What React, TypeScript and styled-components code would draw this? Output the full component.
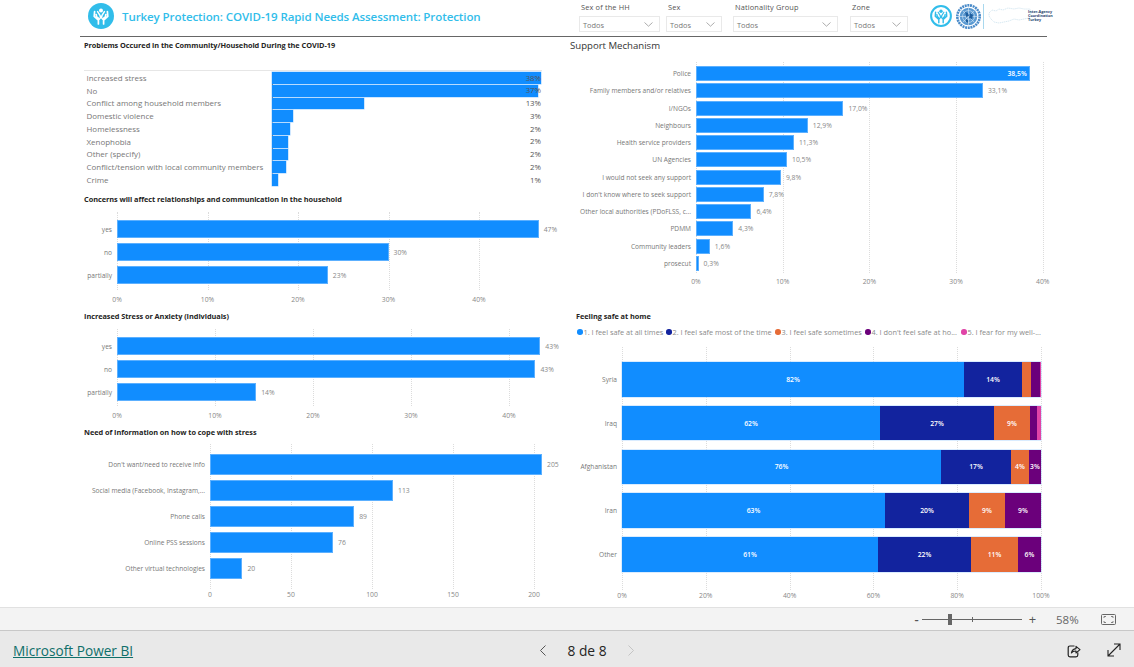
import React from "react";
import styled, { createGlobalStyle } from "styled-components";

const Global = createGlobalStyle`
  html, body { margin: 0; padding: 0; background: #fff; overflow: hidden; }
  * { box-sizing: border-box; }
  body { font-family: "Open Sans", "Noto Sans", sans-serif; }
`;

const Page = styled.div`
  width: 1134px; height: 667px; display: flex; flex-direction: column; overflow: hidden;
`;
const Report = styled.main`
  height: 607px; display: flex; flex-direction: column; background: #fff;
`;
const Header = styled.header`
  margin-left: 80px; width: 967px; height: 37px; display: flex; border-bottom: 1px solid #666;
`;
const Brand = styled.div`
  width: 499px; flex: none; height: 32px; display: flex; align-items: center; gap: 8px; padding-left: 8px;
`;
const ReportTitle = styled.h1`
  margin: 0; font-size: 11.55px; font-weight: 600; color: #31bdea; white-space: nowrap; letter-spacing: -0.1px;
`;
const Filters = styled.div`
  display: flex; flex: none;
`;
const Filter = styled.div<{ $w: number; $gap: number }>`
  width: ${(p) => p.$w}px; margin-right: ${(p) => p.$gap}px; display: flex; flex-direction: column;
`;
const FilterLabel = styled.label`
  height: 16px; padding: 2px 0 0 2px; font-size: 7.4px; line-height: 10px; color: #555; white-space: nowrap; letter-spacing: 0.15px;
`;
const Dropdown = styled.div`
  height: 16px; border: 1px solid #e9e9e9; display: flex; align-items: center; justify-content: space-between;
  padding: 1px 6px 0 3px; font-size: 7.4px; color: #777;
`;
const Logos = styled.div`
  display: flex; flex: none; align-items: center; height: 32px; gap: 4px;
`;
const LogoDivider = styled.span`
  width: 1px; height: 25px; background: #a9d8ee; margin-left: -2px;
`;
const LogoText = styled.span`
  width: 26px; margin-left: -8px; font-size: 3.8px; line-height: 4.2px; font-weight: 700; color: #1f3f6e;
`;
const Graphic = styled.svg`
  flex: none; display: block;
`;

const Columns = styled.div`
  flex: 1; display: grid; grid-template-columns: 486px 1fr; padding-left: 84px;
`;
const Column = styled.div`
  display: flex; flex-direction: column;
`;
const Visual = styled.section<{ $h: number }>`
  height: ${(p) => p.$h}px;
`;
const Title = styled.h2`
  margin: 0; height: 12px; font-size: 7.35px; line-height: 12px; font-weight: 700; color: #252423; white-space: nowrap; letter-spacing: -0.05px;
`;
const TopTitle = styled(Title)`
  margin-top: 2px;
`;
const IndentedTitle = styled(Title)`
  padding-left: 6px;
`;
const LargeTitle = styled.h2`
  margin: 0; height: 18px; font-size: 9.6px; line-height: 18px; font-weight: 400; color: #333; white-space: nowrap;
`;

const Table = styled.div`
  margin-top: 19px; width: 458px; border-top: 1px solid #e6e6e6; padding-top: 0.6px;
`;
const TableRow = styled.div`
  height: 12.75px; display: flex; align-items: center;
`;
const TableLabel = styled.span`
  width: 188px; padding-left: 2.5px; font-size: 7.95px; color: #777; white-space: nowrap; overflow: hidden;
`;
const TableCell = styled.div`
  position: relative; flex: 1; height: 100%; display: flex; align-items: center; border-left: 1px solid #333;
`;
const TableBar = styled.div`
  height: 11.6px; margin-left: -1px; background: #118dff; box-shadow: 0 0 0 0.5px #9fd0ff;
`;
const TableValue = styled.span`
  position: absolute; right: 1px; top: 0; font-size: 7.8px; line-height: 12.75px; color: #555;
`;

const Plot = styled.div<{ $mt: number; $pt: number; $pb: number }>`
  position: relative; margin-top: ${(p) => p.$mt}px; padding: ${(p) => p.$pt}px 0 ${(p) => p.$pb}px;
`;
const GridLine = styled.span`
  position: absolute; top: 0; bottom: 0; width: 0; border-left: 1px dotted #dcdcdc;
`;
const Row = styled.div<{ $h: number; $gap: number }>`
  position: relative; height: ${(p) => p.$h}px; margin-bottom: ${(p) => p.$gap}px; display: flex; align-items: center;
  &:last-child { margin-bottom: 0; }
`;
const RowLabel = styled.span<{ $w: number }>`
  width: ${(p) => p.$w}px; flex: none; padding-right: 5px; text-align: right; font-size: 6.6px; color: #777; white-space: nowrap; overflow: hidden;
`;
const Bar = styled.div`
  flex: none; height: 100%; display: flex; align-items: center; justify-content: flex-end; background: #118dff; box-shadow: inset 0 0 0 1px #5cb0ff;
`;
const InsideValue = styled.span`
  padding-right: 3px; font-size: 6.8px; font-weight: 600; color: #fff;
`;
const OutsideValue = styled.span`
  margin-left: 5px; font-size: 6.8px; color: #888; white-space: nowrap;
`;
const Axis = styled.div<{ $mt: number; $ml: number }>`
  margin-top: ${(p) => p.$mt}px; margin-left: ${(p) => p.$ml}px; display: flex; height: 10px;
`;
const Tick = styled.span<{ $w: number }>`
  width: ${(p) => p.$w}px; flex: none; text-align: center; font-size: 6.8px; line-height: 10px; color: #888;
`;

const Legend = styled.div`
  margin-top: 5px; height: 10px; display: flex; padding-left: 7px; font-size: 7.35px; line-height: 10px; color: #8a8a8a; white-space: nowrap;
`;
const LegendItem = styled.span<{ $w: number }>`
  width: ${(p) => p.$w}px; flex: none; display: flex; align-items: center; gap: 1px;
`;
const Dot = styled.i<{ $c: string }>`
  width: 5.5px; height: 5.5px; border-radius: 50%; background: ${(p) => p.$c}; flex: none;
`;
const Stack = styled.div`
  display: flex; height: 100%; box-shadow: 0 0 0 0.5px #b5d9ff;
`;
const Segment = styled.div<{ $c: string }>`
  height: 100%; flex: none; background: ${(p) => p.$c}; color: #fff; display: flex; align-items: center; justify-content: center;
  font-size: 6.8px; font-weight: 600; overflow: hidden;
`;

const ZoomBar = styled.div`
  height: 24px; border-top: 1px solid #e1e1e1; border-bottom: 1px solid #c8c8c8; background: #f3f3f3;
  display: flex; align-items: center; color: #666; padding-left: 911px;
`;
const ZoomSign = styled.span`
  width: 11px; font-size: 13px; font-weight: 600; line-height: 20px; text-align: center; color: #555;
`;
const ZoomPlus = styled(ZoomSign)`
  width: 9px; font-weight: 400;
`;
const Slider = styled.div`
  position: relative; width: 100px; height: 1px; margin: 0 6px 0 0; background: #666;
`;
const SliderThumb = styled.span`
  position: absolute; left: 26px; top: -5px; width: 4px; height: 11px; background: #666;
`;
const SliderNotch = styled.span`
  position: absolute; left: 50px; top: -2px; width: 1px; height: 5px; background: #666;
`;
const ZoomValue = styled.span`
  margin-left: 19px; width: 45px; font-size: 11.5px; color: #666;
`;
const Footer = styled.footer`
  flex: 1; background: #e9e9e9; display: grid; grid-template-columns: 539px auto 1fr; align-items: center; padding-top: 2px;
`;
const PowerLink = styled.a`
  margin-left: 13px; font-size: 13.65px; color: #0f6f6a; text-decoration: underline; white-space: nowrap;
`;
const Pager = styled.div`
  display: flex; align-items: center; color: #252423;
`;
const PageText = styled.span`
  width: 60px; margin: 0 10px; text-align: center; font-size: 13.8px; font-weight: 500; color: #252423;
`;
const FooterActions = styled.div`
  display: flex; justify-content: flex-end; align-items: center; gap: 26px; padding-right: 13px;
`;

type Item = { label: string; value: number; text: string };

const HChart = ({ items, labelW, scale, ticks, step, rowH, gap, mt, pt, pb, axisMt, insideFirst, percent }: {
  items: Item[]; labelW: number; scale: number; ticks: number[]; step: number; rowH: number; gap: number;
  mt: number; pt: number; pb: number; axisMt: number; insideFirst?: boolean; percent?: boolean;
}) => (
  <>
    <Plot $mt={mt} $pt={pt} $pb={pb}>
      {ticks.map((t) => (
        <GridLine key={t} style={{ left: labelW + t * scale }} />
      ))}
      {items.map((it, i) => (
        <Row key={it.label} $h={rowH} $gap={gap}>
          <RowLabel $w={labelW}>{it.label}</RowLabel>
          <Bar style={{ width: it.value * scale }}>
            {insideFirst && i === 0 && <InsideValue>{it.text}</InsideValue>}
          </Bar>
          {!(insideFirst && i === 0) && <OutsideValue>{it.text}</OutsideValue>}
        </Row>
      ))}
    </Plot>
    <Axis $mt={axisMt} $ml={labelW - (step * scale) / 2}>
      {ticks.map((t) => (
        <Tick key={t} $w={step * scale}>{t}{percent ? "%" : ""}</Tick>
      ))}
    </Axis>
  </>
);

const HandsLogo = ({ size, ring }: { size: number; ring?: boolean }) => (
  <Graphic width={size} height={size} viewBox="0 0 26 26">
    {ring ? (
      <circle cx="13" cy="13" r="11.7" fill="#fff" stroke="#31bdea" strokeWidth="2.4" />
    ) : (
      <circle cx="13" cy="13" r="13" fill="#31bdea" />
    )}
    <g fill="none" stroke={ring ? "#31bdea" : "#fff"} strokeLinecap="round" strokeLinejoin="round">
      <circle cx="13" cy="7.4" r="2" fill={ring ? "#31bdea" : "#fff"} stroke="none" />
      <path d="M9.6 8.6 L12 12.4 L12.6 15 M16.4 8.6 L14 12.4 L13.4 15" strokeWidth="1.5" />
      <path d="M6.6 8.5 L6.2 13.4 L10.4 17.2 L10.4 21 M8.2 11.6 L8.6 13.8 L11.4 16" strokeWidth="1.7" />
      <path d="M19.4 8.5 L19.8 13.4 L15.6 17.2 L15.6 21 M17.8 11.6 L17.4 13.8 L14.6 16" strokeWidth="1.7" />
    </g>
  </Graphic>
);

const UnLogo = () => (
  <Graphic width="25" height="25" viewBox="0 0 25 25">
    <circle cx="12.5" cy="12.5" r="11.2" fill="none" stroke="#4a8bc9" strokeWidth="2.6" strokeDasharray="2 0.7" />
    <circle cx="12.5" cy="12.5" r="8.8" fill="#5a9ad2" />
    <g fill="none" stroke="#d8e8f5" strokeWidth="0.6">
      <circle cx="12.5" cy="12.5" r="6" />
      <circle cx="12.5" cy="12.5" r="3" />
      <path d="M12.5 4v17M4 12.5h17M6.5 6.5l12 12M18.5 6.5l-12 12" />
    </g>
    <path d="M9 8l3 1 1 3-3 1zM14 9l3 2-1 4-3-1zM10 15l2 1 0 3-2-1z" fill="#1f5f9f" />
  </Graphic>
);

const TurkeyMap = () => (
  <Graphic width="44" height="22" viewBox="0 0 44 22">
    <path
      d="M1 8 L4 5 L8 6 L11 4 L15 5 L20 3 L26 4 L31 3 L36 4 L42 4 L43 9 L41 13 L36 14 L31 15 L26 14 L21 16 L16 17 L11 18 L6 17 L3 14 L1 11 Z"
      fill="none" stroke="#cfe3ef" strokeWidth="0.8" strokeDasharray="1.4 0.6"
    />
  </Graphic>
);

const Chevron = ({ dir = "down", color = "#888", size = 8 }: { dir?: "down" | "left" | "right"; color?: string; size?: number }) => {
  if (dir === "down") {
    return (
      <Graphic width="9" height="5" viewBox="0 0 9 5"><path d="M0.5 0.5 L4.5 4.2 L8.5 0.5" fill="none" stroke={color} strokeWidth="0.7" /></Graphic>
    );
  }
  return (
    <Graphic width={size} height="11" viewBox="0 0 8 11">
      <path d={dir === "left" ? "M6.5 0.5 L1.5 5.5 L6.5 10.5" : "M1.5 0.5 L6.5 5.5 L1.5 10.5"} fill="none" stroke={color} strokeWidth="1" />
    </Graphic>
  );
};

const FitIcon = () => (
  <Graphic width="15" height="11" viewBox="0 0 15 11">
    <rect x="0.5" y="0.5" width="14" height="10" rx="1" fill="none" stroke="#666" />
    <path d="M3 4V2.5H5M10 2.5H12V4M12 7V8.5H10M5 8.5H3V7" fill="none" stroke="#666" strokeWidth="0.8" />
  </Graphic>
);
const ShareIcon = () => (
  <Graphic width="14" height="15" viewBox="0 0 14 15">
    <path d="M7.5 3 H3 Q1.2 3 1.2 4.8 V12 Q1.2 13.8 3 13.8 H9 Q10.8 13.8 10.8 12 V9.5" fill="none" stroke="#222" strokeWidth="1.2" />
    <path d="M4.4 10 Q5 6 9 5.6 V3.4 L13 6.7 L9 10 V8 Q6 7.8 4.4 10 Z" fill="#e9e9e9" stroke="#222" strokeWidth="1.1" strokeLinejoin="round" />
  </Graphic>
);
const ExpandIcon = () => (
  <Graphic width="14" height="14" viewBox="0 0 14 14">
    <path d="M1.5 12.5 L12.5 1.5 M7 1 H13 V7 M1 7 V13 H7" fill="none" stroke="#222" strokeWidth="1.1" />
  </Graphic>
);

const problems = [
  ["Increased stress", 269, "38%"], ["No", 266, "37%"], ["Conflict among household members", 92, "13%"],
  ["Domestic violence", 21, "3%"], ["Homelessness", 18, "2%"], ["Xenophobia", 16, "2%"], ["Other (specify)", 15.5, "2%"],
  ["Conflict/tension with local community members", 14, "2%"], ["Crime", 6, "1%"],
] as const;

const concerns: Item[] = [
  { label: "yes", value: 46.6, text: "47%" }, { label: "no", value: 30, text: "30%" }, { label: "partially", value: 23.3, text: "23%" },
];
const stressItems: Item[] = [
  { label: "yes", value: 43.2, text: "43%" }, { label: "no", value: 42.7, text: "43%" }, { label: "partially", value: 14.2, text: "14%" },
];
const info: Item[] = [
  { label: "Don't want/need to receive info", value: 205, text: "205" },
  { label: "Social media (Facebook, Instagram,...", value: 113, text: "113" },
  { label: "Phone calls", value: 89, text: "89" },
  { label: "Online PSS sessions", value: 76, text: "76" },
  { label: "Other virtual technologies", value: 20, text: "20" },
];
const support: Item[] = [
  ["Police", 38.5], ["Family members and/or relatives", 33.1], ["I/NGOs", 17.0], ["Neighbours", 12.9],
  ["Health service providers", 11.3], ["UN Agencies", 10.5], ["I would not seek any support", 9.8],
  ["I don't know where to seek support", 7.8], ["Other local authorities (PDoFLSS, c...", 6.4], ["PDMM", 4.3],
  ["Community leaders", 1.6], ["prosecut", 0.3],
].map(([label, v]) => ({ label: label as string, value: v as number, text: `${(v as number).toFixed(1).replace(".", ",")}%` }));

const colors = ["#118dff", "#12239e", "#e66c37", "#6b007b", "#e044a7"];
const legend = [
  { t: "1. I feel safe at all times", w: 89 }, { t: "2. I feel safe most of the time", w: 109 },
  { t: "3. I feel safe sometimes", w: 90 }, { t: "4. I don't feel safe at ho...", w: 96 }, { t: "5. I fear for my well-...", w: 85 },
];
const safety: { label: string; parts: [number, string][] }[] = [
  { label: "Syria", parts: [[342, "82%"], [58, "14%"], [9, ""], [9, ""], [1, ""]] },
  { label: "Iraq", parts: [[258, "62%"], [114, "27%"], [36, "9%"], [7, ""], [4, ""]] },
  { label: "Afghanistan", parts: [[319, "76%"], [70, "17%"], [18, "4%"], [12, "3%"]] },
  { label: "Iran", parts: [[263, "63%"], [84, "20%"], [36, "9%"], [36, "9%"]] },
  { label: "Other", parts: [[256, "61%"], [93, "22%"], [47, "11%"], [23, "6%"]] },
];
const filters = [
  { label: "Sex of the HH", w: 81, gap: 6 }, { label: "Sex", w: 56, gap: 11 },
  { label: "Nationality Group", w: 105, gap: 12 }, { label: "Zone", w: 58, gap: 22 },
];

export default function App() {
  return (
    <Page>
      <Global />
      <Report>
        <Header>
          <Brand>
            <HandsLogo size={26} />
            <ReportTitle>Turkey Protection: COVID-19 Rapid Needs Assessment: Protection</ReportTitle>
          </Brand>
          <Filters>
            {filters.map((f) => (
              <Filter key={f.label} $w={f.w} $gap={f.gap}>
                <FilterLabel>{f.label}</FilterLabel>
                <Dropdown>Todos<Chevron /></Dropdown>
              </Filter>
            ))}
          </Filters>
          <Logos>
            <HandsLogo size={22} ring />
            <UnLogo />
            <LogoDivider />
            <TurkeyMap />
            <LogoText>Inter-Agency Coordination Turkey</LogoText>
          </Logos>
        </Header>
        <Columns>
          <Column>
            <Visual $h={156}>
              <TopTitle>Problems Occured in the Community/Household During the COVID-19</TopTitle>
              <Table>
                {problems.map(([label, w, text]) => (
                  <TableRow key={label}>
                    <TableLabel>{label}</TableLabel>
                    <TableCell>
                      <TableBar style={{ width: w }} />
                      <TableValue>{text}</TableValue>
                    </TableCell>
                  </TableRow>
                ))}
              </Table>
            </Visual>
            <Visual $h={117}>
              <Title>Concerns will affect relationships and communication in the household</Title>
              <HChart items={concerns} labelW={33} scale={9.05} ticks={[0, 10, 20, 30, 40]} step={10} rowH={18} gap={5} mt={7} pt={8} pb={6} axisMt={5} percent />
            </Visual>
            <Visual $h={116}>
              <Title>Increased Stress or Anxiety (Individuals)</Title>
              <HChart items={stressItems} labelW={33} scale={9.8} ticks={[0, 10, 20, 30, 40]} step={10} rowH={18} gap={5} mt={7} pt={8} pb={5} axisMt={5} percent />
            </Visual>
            <Visual $h={179}>
              <Title>Need of Information on how to cope with stress</Title>
              <HChart items={info} labelW={126} scale={1.62} ticks={[0, 50, 100, 150, 200]} step={50} rowH={20.5} gap={5.5} mt={6} pt={10} pb={10} axisMt={1} />
            </Visual>
          </Column>
          <Column>
            <Visual $h={273}>
              <LargeTitle>Support Mechanism</LargeTitle>
              <HChart items={support} labelW={126} scale={8.67} ticks={[0, 10, 20, 30, 40]} step={10} rowH={15} gap={2.25} mt={7} pt={4} pb={2} axisMt={4} insideFirst percent />
            </Visual>
            <Visual $h={295}>
              <IndentedTitle>Feeling safe at home</IndentedTitle>
              <Legend>
                {legend.map((l, i) => (
                  <LegendItem key={l.t} $w={l.w}><Dot $c={colors[i]} />{l.t}</LegendItem>
                ))}
              </Legend>
              <Plot $mt={10} $pt={15} $pb={18.5}>
                {[0, 20, 40, 60, 80, 100].map((t) => (
                  <GridLine key={t} style={{ left: 52 + t * 4.19 }} />
                ))}
                {safety.map((r) => (
                  <Row key={r.label} $h={34.5} $gap={9.25}>
                    <RowLabel $w={52}>{r.label}</RowLabel>
                    <Stack>
                      {r.parts.map(([w, text], i) => (
                        <Segment key={i} $c={colors[i]} style={{ width: w }}>{text}</Segment>
                      ))}
                    </Stack>
                  </Row>
                ))}
              </Plot>
              <Axis $mt={1} $ml={52 - 41.9}>
                {[0, 20, 40, 60, 80, 100].map((t) => (
                  <Tick key={t} $w={83.8}>{t}%</Tick>
                ))}
              </Axis>
            </Visual>
          </Column>
        </Columns>
      </Report>
      <ZoomBar>
        <ZoomSign>-</ZoomSign>
        <Slider><SliderThumb /><SliderNotch /></Slider>
        <ZoomPlus>+</ZoomPlus>
        <ZoomValue>58%</ZoomValue>
        <FitIcon />
      </ZoomBar>
      <Footer>
        <PowerLink href="#">Microsoft Power BI</PowerLink>
        <Pager>
          <Chevron dir="left" color="#555" size={8} />
          <PageText>8 de 8</PageText>
          <Chevron dir="right" color="#c4c4c4" size={8} />
        </Pager>
        <FooterActions>
          <ShareIcon />
          <ExpandIcon />
        </FooterActions>
      </Footer>
    </Page>
  );
}
